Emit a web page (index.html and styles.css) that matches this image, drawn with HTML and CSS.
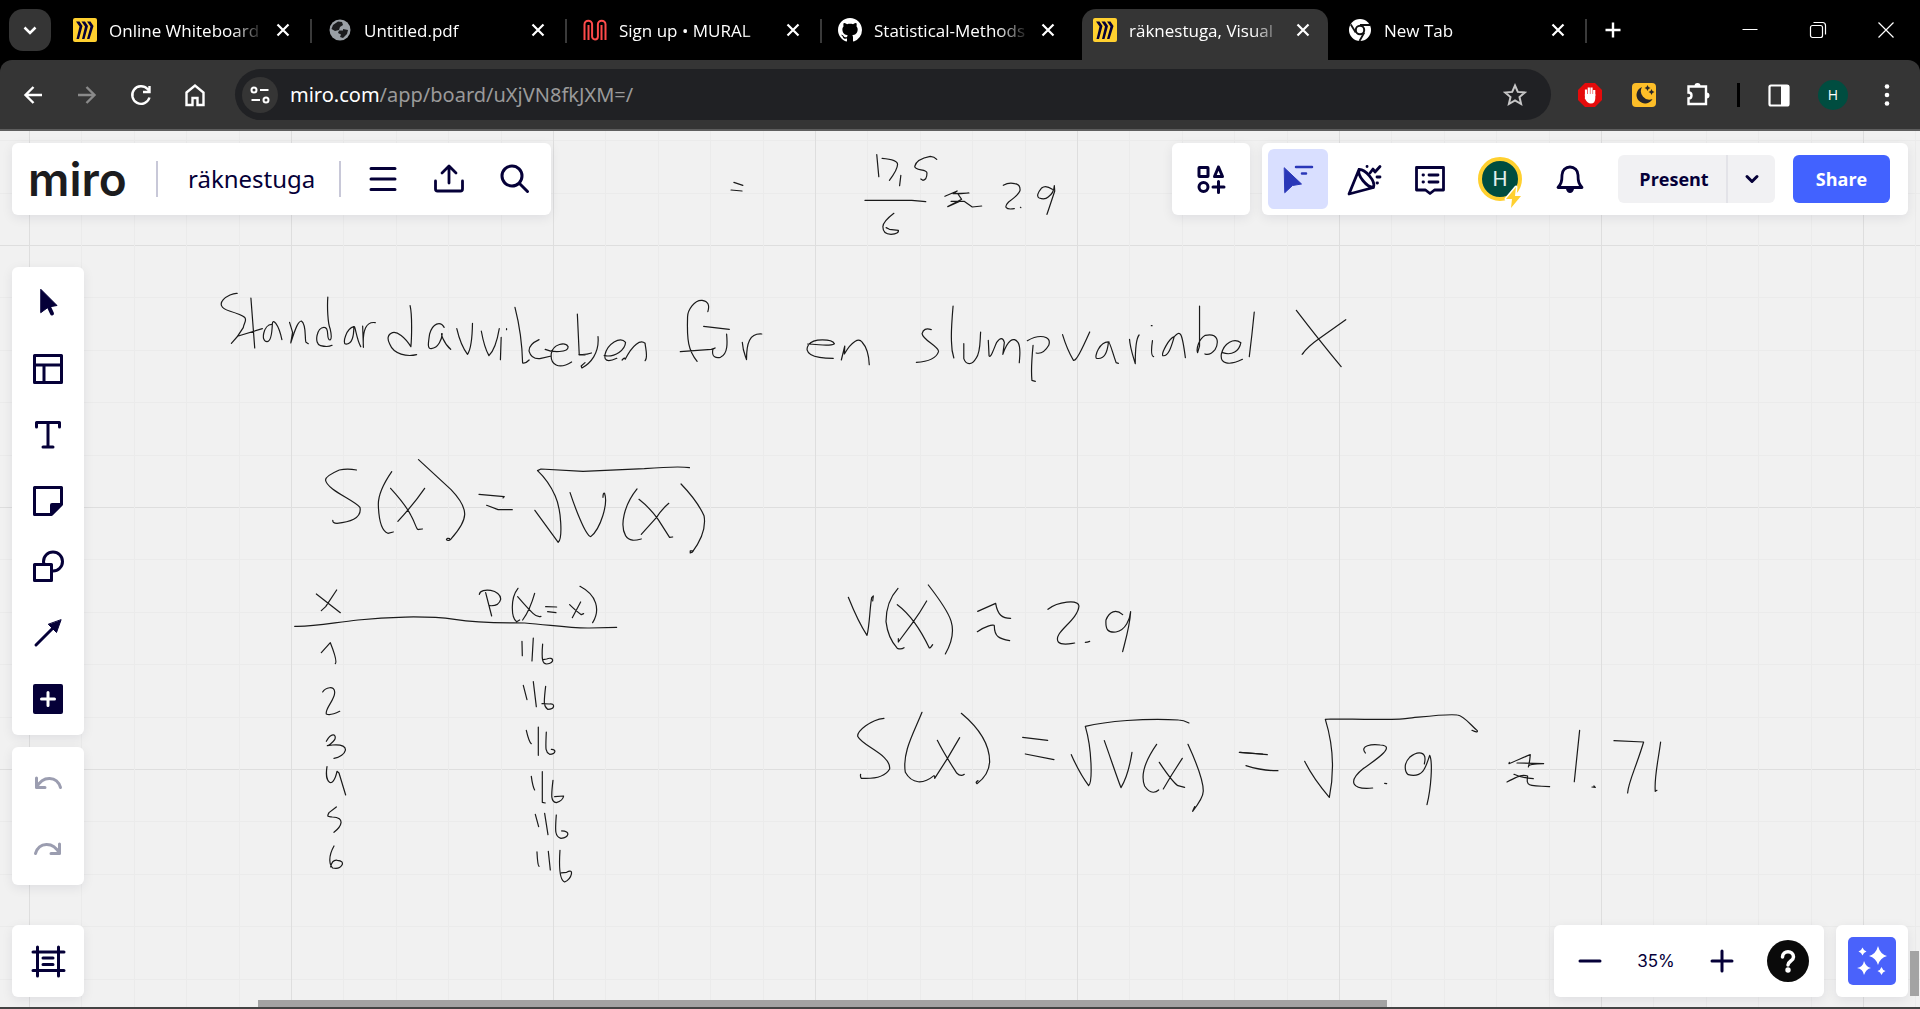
FILE: index.html
```html
<!DOCTYPE html>
<html lang="en">
<head>
<meta charset="utf-8">
<title>räknestuga, Visual Workspace</title>
<link rel="stylesheet" href="styles.css">
</head>
<body>
<svg class="defs" aria-hidden="true">
  <symbol id="i-close" viewBox="0 0 24 24"><path d="M6.500 6.500l11 11M17.500 6.500l-11 11" stroke-width="2.200"/></symbol>
  <symbol id="i-miro" viewBox="0 0 24 24"><rect width="24" height="24" rx="2" fill="#ffd02f" stroke="none"/><path d="M3 3.500h3.500l3 4.500-3.500 13H3.500l3-12.500zM8.500 3.500H12l3 4.500-3.500 13H9l3-12.500zM14 3.500h3.500l3 4.500-4 13H14l3.500-12.500z" fill="#050038" stroke="none"/></symbol>
</svg>

<header class="browser">
  <div class="tabs">
    <button class="tab-search" aria-label="Search tabs"><svg viewBox="0 0 24 24"><path d="M6.500 9.500l5.500 5.500 5.500-5.500" stroke-width="2.500"/></svg></button>
    <div class="tab"><svg class="fav"><use href="#i-miro"/></svg><span class="title">Online Whiteboard</span><button class="x" aria-label="Close tab"><svg><use href="#i-close"/></svg></button></div>
    <div class="tab"><svg class="fav" viewBox="0 0 24 24"><circle cx="12" cy="12" r="10.500" fill="#9aa0a6" stroke="none"/><path d="M10 3.500l4 .5 1 3-3 2-1 3-4 1-3.500-2 1.500-4zM15 11l5 1-1 4-4 4-3-1 1-2.500-3-1.500 1-2.500 4 0z" fill="#1b1c1e" stroke="none"/></svg><span class="title">Untitled.pdf</span><button class="x" aria-label="Close tab"><svg><use href="#i-close"/></svg></button></div>
    <div class="tab"><svg class="fav" viewBox="0 0 24 24"><path d="M1.500 22V6.500a3.800 3.800 0 0 1 7.600 0v12a2.900 2.900 0 0 0 5.800 0v-12a3.800 3.800 0 0 1 7.600 0V22M5.500 22V7M18.500 22V7" stroke="#ff4b4b" stroke-width="2" stroke-linecap="butt"/></svg><span class="title">Sign up • MURAL</span><button class="x" aria-label="Close tab"><svg><use href="#i-close"/></svg></button></div>
    <div class="tab"><svg class="fav" viewBox="0 0 16 16"><path fill="#fff" stroke="none" d="M8 0C3.580 0 0 3.580 0 8c0 3.540 2.290 6.530 5.470 7.590.4.070.55-.17.55-.38 0-.19-.01-.82-.01-1.490-2.010.37-2.530-.49-2.690-.94-.09-.23-.48-.94-.82-1.130-.28-.15-.68-.52-.01-.53.63-.01 1.080.58 1.230.82.72 1.210 1.870.87 2.330.66.07-.52.28-.87.51-1.070-1.780-.2-3.640-.89-3.640-3.950 0-.87.31-1.590.82-2.150-.08-.2-.36-1.020.08-2.120 0 0 .67-.21 2.200.82.64-.18 1.320-.27 2-.27s1.360.09 2 .27c1.530-1.040 2.200-.82 2.200-.82.44 1.100.16 1.920.08 2.120.51.56.82 1.270.82 2.150 0 3.070-1.870 3.750-3.650 3.950.29.25.54.73.54 1.480 0 1.070-.01 1.930-.01 2.200 0 .21.15.46.55.38A8.010 8.010 0 0 0 16 8c0-4.420-3.580-8-8-8z"/></svg><span class="title">Statistical-Methods</span><button class="x" aria-label="Close tab"><svg><use href="#i-close"/></svg></button></div>
    <div class="tab active"><svg class="fav"><use href="#i-miro"/></svg><span class="title">räknestuga, Visual</span><button class="x" aria-label="Close tab"><svg><use href="#i-close"/></svg></button></div>
    <div class="tab"><svg class="fav" viewBox="0 0 24 24"><circle cx="12" cy="12" r="11" fill="#fff" stroke="none"/><circle cx="12" cy="12" r="4.200" fill="#fff" stroke="#111" stroke-width="2"/><path d="M12 7h10M7.700 14.500L2.800 6.500M16.300 14.500L11.500 23" stroke="#111" stroke-width="1.800"/></svg><span class="title">New Tab</span><button class="x" aria-label="Close tab"><svg><use href="#i-close"/></svg></button></div>
    <button class="x new" aria-label="New tab"><svg viewBox="0 0 24 24"><path d="M12 4.500v15M4.500 12h15" stroke-width="2.400"/></svg></button>
    <div class="window">
      <button aria-label="Minimize"><svg viewBox="0 0 24 24"><path d="M4.500 11.500h15" stroke-width="1"/></svg></button>
      <button aria-label="Restore"><svg viewBox="0 0 24 24"><rect x="4.500" y="7.500" width="12" height="12" rx="2" stroke-width="1.200"/><path d="M7.500 4.500h9a3 3 0 0 1 3 3v9" stroke-width="1.200"/></svg></button>
      <button aria-label="Close"><svg viewBox="0 0 24 24"><path d="M4.500 4.500l15 15M19.500 4.500l-15 15" stroke-width="1.200"/></svg></button>
    </div>
  </div>
  <div class="toolbar">
    <button aria-label="Back"><svg viewBox="0 0 24 24"><path d="M21 12H4.500M12.500 4l-8 8 8 8" stroke-width="2.400"/></svg></button>
    <button class="dim" aria-label="Forward"><svg viewBox="0 0 24 24"><path d="M3 12h16.500M11.500 4l8 8-8 8" stroke-width="2.400"/></svg></button>
    <button aria-label="Reload"><svg viewBox="0 0 24 24"><path d="M20.500 14.500a8.800 8.800 0 1 1-2-8.500l2 2M20.500 3v6h-6.500" stroke-width="2.400"/></svg></button>
    <button aria-label="Home"><svg viewBox="0 0 24 24"><path d="M3.500 9.500L12 2.500l8.500 7V22h-6v-7h-5v7h-6z" stroke-width="2.400"/></svg></button>
    <div class="omnibox">
      <button class="chip" aria-label="Site information"><svg viewBox="0 0 24 24"><path d="M12 7h8.500M3.500 17H12" stroke-width="2.200"/><circle cx="6" cy="7" r="2.500" stroke-width="2"/><circle cx="18" cy="17" r="2.500" stroke-width="2"/></svg></button>
      <a class="url" href="#"><b>miro.com</b>/app/board/uXjVN8fkJXM=/</a>
      <button class="star" aria-label="Bookmark"><svg viewBox="0 0 24 24"><path d="M12 2.500l2.800 6.400 7 .6-5.300 4.600 1.600 6.900-6.100-3.700L5.900 21l1.600-6.900L2.200 9.500l7-.6z" stroke-width="2"/></svg></button>
    </div>
    <button aria-label="AdBlock"><svg viewBox="0 0 24 24"><path d="M7 0h10l7 7v10l-7 7H7l-7-7V7z" fill="#e50b0b" stroke="none"/><path d="M8 13V6.500M10.800 12V4.500M13.500 12V4.500M16.200 13V7" stroke-width="2.200"/><path d="M6.900 11h10.400v4q0 5.500-4.500 5.500-3.500 0-5.900-5z" fill="#fff" stroke="none"/></svg></button>
    <button aria-label="Dark mode extension"><svg viewBox="0 0 24 24"><rect width="24" height="24" rx="4" fill="#fdbe28" stroke="none"/><path d="M10 4a8.500 8.500 0 1 0 10.500 12A8.500 8.500 0 0 1 10 4zM15.500 2l1 2 2 1-2 1-1 2-1-2-2-1 2-1zM19.500 6l1 2 2 1-2 1-1 2-1-2-2-1 2-1z" fill="#26262b" stroke="none"/></svg></button>
    <button aria-label="Extensions"><svg viewBox="0 0 24 24"><path d="M2.500 3.500H20v17.500H2.500v-5.500c4 0 4-6 0-6z" stroke-width="2.400"/><path d="M8.500 3a3 3 0 0 1 6 0zM20.500 9.500a3 3 0 0 1 0 6z" fill="#fff" stroke="none"/></svg></button>
    <span class="bar"></span>
    <button aria-label="Side panel"><svg viewBox="0 0 24 24"><rect x="2.500" y="2.500" width="19" height="20" rx="1.500" stroke-width="2.200"/><path d="M14 2h8v21h-8z" fill="#fff" stroke="none"/></svg></button>
    <button class="profile" aria-label="Profile">H</button>
    <button aria-label="Menu"><svg viewBox="0 0 24 24"><g fill="#fff" stroke="none"><circle cx="12" cy="3.500" r="2.300"/><circle cx="12" cy="12" r="2.300"/><circle cx="12" cy="20.500" r="2.300"/></g></svg></button>
  </div>
</header>

<main class="board">
  <!-- Pen strokes on the canvas, one group per written line -->
  <svg class="ink" role="img" aria-label="Handwritten notes: Standardavvikelsen för en slumpvariabel X">
    <g transform="translate(640 -131) scale(.4082 .3333)">
      <path d="M230 547l22 9M223 570l27 3M580 464l5 66M593 475q38 4 38 18 0 16-20 48M639 526l-3 31M727 478q-6-8-16-9-34 8-38 30c0 15 30 6 30 20q0 20-10 22l-5-4M551 601h115l34 4M622 640q-26 24-27 40 0 22 20 23 20-2 18-12l-22-3-8-5M747 589l30-16-10 8 39-2-27 3 9 16-34 22 30-16 10 0 20 17 23-3M762 604l24 0M890 556q14-10 28-5 14 2 13 20-2 12-28 35c-12 15-8 24 14 20M932 622l1 1M1010 568q-16-14-26-4-16 24-6 30 14 6 22-3 14-12 15-34l1 16q-8 30-19 70"/>
    </g>
    <g transform="translate(200 139) scale(.3827 .3333)">
      <path d="M97 70c-20-2-70 35-20 53 60 22 40 23 36 50q-14 28-31 47M133 84l10 150M100 198l63-22M187 163c-20 0-30 52-12 52 14 0 14-60 14-52 0-20 16-3 25 46M234 157l8 30-5 32c14-50 20-65 28-66 14 10 8 55 12 64l6 4M334 81c-2 30 0 80 6 95q6 30 0 34c-12 0 0-38-15-38-20-2-28 50-10 55 14 4 25 2 30-1M402 170c-20 5-30 50-22 52 18 2 22-25 22-52 4-5 6 35 18 60M425 168l2 64q-4-80 31-74M549 107c6 30 4 100 2 123-16-30-36-46-48-42-14 6-14 20-7 35 10 30 45 38 70 31M638 172c-10-20-30-12-38 20-4 30-6 44 4 44 20-2 28-30 29-45-6-5 4 30 22 47M671 176q10 50 28 77 12-20 13-93M735 183q8 50 20 74 18-20 27-81M787 202l-2 67M801 176v3M823 112q18 80 20 167 8 2 17-9M886 209q-28 15-26 35 6 24 28 22l30-8M902 238c20 10 60 10 60-8-6-16-40-8-44 20-4 35 20 50 53 26M986 132l5 123h15M990 253q18 2 33-4M1040 200c4 50-20 80-42 94l-2-6 10-10M1056 257c30 6 55-18 56-40-14-20-48 5-54 38-2 14 4 24 31 10M1103 270q8-10 8-2c20-45 40-60 52-48 2 20 8 45 0 52"/>
      <path d="M1327 125q8-30-15-34c-20-2-38 30-38 50-2 70 2 100 25 133M1316 169l67 9M1255 245l81-7 10-4-6 4c-4 26 10 26 20 24 20-10 18-45 16-70M1417 217c2 30 8 40 11 52 0-50 8-80 40-77"/>
      <path d="M409 600q-24-5-45 0-36 18-36 30c4 30 75 60 90 82 6 35-30 45-60 48q-12 0-11-9M501 605q-36 60-35 100 2 75 25 85l14-4M498 655q40 50 54 83c12 25 14 45 20 40l9-1M587 655q-30 50-70 99M571 569l85 90c50 60 45 90 0 148q-8 8-12 2 2-6 8-3M729 673l66 7-3 4M749 706l30 13h37M882 602l9-5 110 7 160-8q90-8 118-3M875 721l61 96c12-12 8-100-8-140q-18-45-46-75M967 668c10 35 40 130 54 132 26-24 46-100 36-130q-4-2-4 12M1142 657c-35 50-45 110-30 140 10 18 25 15 41 10M1147 688q28 25 50 60l30 54 8-1M1225 700q-20 20-32 42l-40 51M1257 642q42 50 60 95 8 50-31 110l-5 2v-6h8"/>
    </g>
    <g transform="translate(800 139) scale(.3827 .3333)">
      <path d="M20 222c30 0 55 10 70-1-6-14-55-18-68 4-12 22 6 40 65 40M108 270l9-42-1 24c20-40 38-48 46-36 12 15 18 40 19 68M343 179q-20-8-24 12c2 20 44 38 43 54-6 20-24 30-58 32M400 108q-6 80-4 110 0 24 6 46M428 221v45c6 20 22 20 32-1 12-16 10-50 12-79M492 211l2 46c4 10 12-20 20-40 10-15 16-14 20 0l-4 36c12-42 28-55 40-35 8 16 4 40 3 60M609 226q-6 70-3 105l9 3M594 212c30-20 65-16 56 14q-14 28-33 23M686 194q12 45 28 76c6 8 22-30 43-84M808 216c-25-3-40 45-33 49 20 4 28-16 31-49 4 0 10 30 20 62l6 2M861 208c2 30 12 60 15 73 0-50 2-75 10-86M918 167h2M921 212q-6 45 3 48M978 200c-14 5-34 50-30 57 16 4 24-35 30-57 16-20 20-15 29 63M1044 108v120l-5 20c-4-10 2-40 20-52 34-8 36 20 26 42q-14 20-27 14M1104 248c25 10 44-5 48-30-18-15-44 0-51 34-4 30 20 36 55 16M1187 126q-6 70-13 134M1297 121q60 90 117 169M1426 149l-70 57q-30 24-44 47l3-3"/>
    </g>
    <g transform="translate(280 439) scale(.3333)">
      <path d="M109 72l72 56M170 60l-33 50-13 12M44 169c60 2 120-12 190-19 80-9 200-14 290-2 80 12 150 10 210 11 80 6 130 16 195 15l81-2M598 73c4-22 66-14 64 15-4 16-20 20-33 19M617 68l18 70M714 55c-24 30-20 90-4 100l9-5M713 80q30 35 46 50 12 12 24 9M764 70q-14 50-36 80M797 110l33 1M803 125l25 3M869 104q20 20 35 30l7-3M902 96l-25 47M900 49c50 26 62 70 38 109"/>
      <path d="M124 248l27-30c6 15 22 55 15 63M128 366c8-14 36-20 36 0 2 22-30 50-25 66 12 6 28-2 40-8M139 514c16-30 32-20 25-5-6 10-20 18-22 18l16-2c60-5 40 35 4 40M141 590c-8 50 18 70 30 14l6 5 20 66M169 711l-22 17c-8 14-2 12 10 13 40 2 28 28 5 46M162 828c-20 35-12 60-4 66 28 6 42-22 14-23-12-2-18 10-20 20"/>
      <path d="M726 214l1 43M760 204l-4 69M788 222c-4 50 0 60 12 60 26-2 22-24 0-15l-10 2M730 346l11 43M760 335l9 75M797 349c-6 50-6 60 6 69 24 0 22-20 5-16l-22-1M739 481q8 35 15 40M775 471v85M799 486c-2 50-4 60 10 67 20 0 20-16 5-15M754 619q4 30 10 41M787 605v92l9 2M819 631c-6 50-6 64 10 67q20-6 22-20l-27 2M766 733l10 37M794 730l10 64M829 735c-4 50-4 65 14 70 24-2 30-22 2-22M771 846q2 40 6 43M805 844l6 56M840 841c-4 60 0 90 14 95 22-10 30-44 6-29l-16 2"/>
    </g>
    <g transform="translate(820 439) scale(.3333)">
      <path d="M85 82c24 60 50 105 56 114 8-30 8-80 14-113l5-5-2 15M234 55q-36 40-36 100 6 50 34 80 12 4 20-2M232 104c40 30 70 75 96 130q4 0 10-10M320 93q-20 35-44 68l-41 55v-10M325 45c70 90 95 130 51 207M473 124l54-24c6 35 20 45 45 45M472 185c20-14 50-24 51-18 0 34 16 40 46 45M684 118c30-24 90-30 93-10-4 45-80 80-62 108 12 12 40 4 49 3M796 217q6 0 13-3M908 134c-20-18-40-10-50 16-2 30 6 38 30 36 30-6 42-40 44-61-2 40-14 80-24 120"/>
      <path d="M192 445c-40 4-80 38-79 54 14 30 100 55 96 98-14 24-50 30-85 28q-4-6-2-12M306 427c-24 60-60 120-50 180 20 36 54 36 86 10M352 511c20 40 40 70 58 98q12 12 23 4M419 503l-37 63-38 59v-6M424 430c60 50 85 95 85 145q-2 40-38 66-6-4 3-9M608 502l75 9M616 552l86 17M754 554q24 55 52 93c12-10 10-110-10-178 60-14 180-26 280-19q14 0 31 9M853 512c18 50 38 110 50 141 18-30 26-60 33-106M1010 523c-35 50-50 90-36 125 18 28 36 18 42 12M1018 577c20 30 40 60 56 70l20 5M1087 565l-32 50-25 42M1104 523q46 100 46 140 0 20-32 61l6-14M1258 547l70 5M1278 587q50 16 96 15"/>
    </g>
    <g transform="translate(1240 559) scale(.3333)">
      <path d="M0 580l82 7" transform="translate(0 -393)"/>
      <path d="M194 607c20 40 50 80 74 108 14-70 14-150-12-234l16-1c70 0 190 4 230-2 60-6 120-14 150-10 20 2 40 30 60 47q2 8-16-1M376 582c-18-22 20-28 45-24 50 2-14 45-50 70-50 40-35 65 27 59M434 673l6 1M553 615c10-40-20-40-44-20-20 20-14 45-4 52 44 10 52-20 64-58 10 20 4 100-8 148M808 610l-1 4c20-8 46-20 64-27q-2 24-6 37 0-10 46-10l-80-2M801 669c30-14 40-24 62-18-4 30-2 30 66 32M822 646q20 10 58 13M1019 514l-16 154M1056 684l10 1-4-4M1122 545l89 4c-24 80-46 120-48 153M1262 549c-8 60-20 110-16 148l5-3" transform="translate(0 -393)"/>
    </g>
  </svg>

  <div class="overlay">
    <div class="row">
      <nav class="panel head">
        <a class="logo" href="#">miro</a>
        <span class="rule"></span>
        <button class="name">räknestuga</button>
        <span class="rule"></span>
        <button class="tool" aria-label="Main menu"><svg viewBox="0 0 36 36"><path d="M6 7.500h24M6 18h24M6 28.500h24"/></svg></button>
        <button class="tool" aria-label="Export"><svg viewBox="0 0 36 36"><path d="M4.500 20v8q0 2 2 2h23q2 0 2-2v-8M18 22V5.500M11 12l7-7 7 7" stroke-width="2.800"/></svg></button>
        <button class="tool" aria-label="Search"><svg viewBox="0 0 36 36"><circle cx="15" cy="15" r="10"/><path d="M22.500 22.500l8 8"/></svg></button>
      </nav>
      <div class="group">
        <div class="panel apps"><button class="tool" aria-label="Apps"><svg viewBox="0 0 36 36"><rect x="6" y="6.500" width="9" height="9" rx=".5"/><path d="M25.500 6l-4 9.500h8zM25.500 20.500v11M20 26h11"/><circle cx="10.500" cy="26" r="4.500"/></svg></button></div>
        <div class="panel collab">
          <button class="tool on" aria-label="Pointer"><svg viewBox="0 0 36 36"><path d="M4.500 7l17 16-9 1.500-7.500 7z" fill="#2a37b8" stroke="#2a37b8" stroke-width="1"/><path d="M16 6h16M22 12.500h4" stroke="#2a37b8" stroke-width="2.500"/></svg></button>
          <button class="tool" aria-label="Reactions"><svg viewBox="0 0 36 36"><path d="M3 33L13 8.500C19 8 30 20 27.500 26.500zM13 8.500c-2 6 8 18 14.500 18" stroke-width="2.800"/><path d="M21 5.500h.1M24 12l3-4 2 3 5-5.500M31 16h3M31 22h.5" stroke-width="2.800"/></svg></button>
          <button class="tool" aria-label="Comments"><svg viewBox="0 0 36 36"><path d="M4.500 6.500h27v22.500h-9l-4.500 3.500-4.500-3.500h-9zM11 14h.5M17 14h9M11 21h.5M17 21h9" stroke-width="2.800"/></svg></button>
          <button class="avatar" aria-label="Account">H<svg viewBox="0 0 24 24"><path d="M14 2L4 14h6l-1 9 10-12h-6z" fill="#ffd02f" stroke="#fff" stroke-width="3" paint-order="stroke"/></svg></button>
          <button class="tool" aria-label="Notifications"><svg viewBox="0 0 36 36"><path d="M18 6a8 8 0 0 0-8 8c0 7-1 9-4 12.500h24c-3-3.500-4-5.500-4-12.500a8 8 0 0 0-8-8z" stroke-width="2.800"/><path d="M14 28h8q-1 4-4 4t-4-4z" fill="#050038" stroke="none"/></svg></button>
          <div class="split"><button>Present</button><button class="drop" aria-label="Present options"><svg viewBox="0 0 24 24"><path d="M7 9.500l5 5 5-5"/></svg></button></div>
          <button class="share">Share</button>
        </div>
      </div>
    </div>

    <aside class="side">
      <div class="panel column">
        <button class="tool" aria-label="Select"><svg viewBox="0 0 36 36"><path d="M11 4.500l16 16-8.500 1.500-7.500 5.500z" fill="#050038" stroke-width="1"/><path d="M19 22l3 6.500" stroke-width="4"/></svg></button>
        <button class="tool" aria-label="Templates"><svg viewBox="0 0 36 36"><path d="M4.500 4.500h27v27h-27zM4.500 14h27M14 14v17"/></svg></button>
        <button class="tool" aria-label="Text"><svg viewBox="0 0 36 36"><path d="M6.500 10V5.500h23V10M18 5.500V30M13 30h10"/></svg></button>
        <button class="tool" aria-label="Sticky note"><svg viewBox="0 0 36 36"><path d="M4.500 4.500h27v17l-10 10h-17z"/><path d="M20 32V22q0-2 2-2h10v2L22 32z" fill="#050038" stroke="none"/></svg></button>
        <button class="tool" aria-label="Shapes"><svg viewBox="0 0 36 36"><circle cx="23" cy="12.500" r="9.500"/><rect x="4.500" y="15.500" width="17" height="16" fill="#fff"/></svg></button>
        <button class="tool" aria-label="Connection line"><svg viewBox="0 0 36 36"><path d="M6 30l16-16"/><path d="M31 5l-4.500 12.500-8-8z" fill="#050038" stroke-width="1"/></svg></button>
        <button class="tool" aria-label="More tools"><svg viewBox="0 0 36 36"><rect x="3" y="3" width="30" height="30" rx="2" fill="#050038" stroke="none"/><path d="M18 11.500v13M11.500 18h13" stroke="#fff"/></svg></button>
      </div>
      <div class="panel column muted">
        <button class="tool" aria-label="Undo"><svg viewBox="0 0 36 36"><path d="M6.500 13v9.500H15M6.500 22.500C13 10 27 11 30.500 22.500"/></svg></button>
        <button class="tool" aria-label="Redo"><svg viewBox="0 0 36 36"><path d="M29.500 13v9.500H21M29.500 22.500C23 10 9 11 5.500 22.500"/></svg></button>
      </div>
    </aside>

    <div class="row">
      <div class="panel column"><button class="tool" aria-label="Frames"><svg viewBox="0 0 36 36"><path d="M7.500 4v29M28.500 4v29M3 9h31M3 27.500h31M13 15h10M13 21.500h10"/></svg></button></div>
      <div class="group">
        <div class="panel zoom">
          <button class="tool" aria-label="Zoom out"><svg viewBox="0 0 36 36"><path d="M8 18h20"/></svg></button>
          <button class="percent">35%</button>
          <button class="tool" aria-label="Zoom in"><svg viewBox="0 0 36 36"><path d="M8 18h20M18 8v20"/></svg></button>
          <button class="help" aria-label="Help"><svg viewBox="0 0 42 42"><path d="M15.500 17c0-7 11-7 11 0 0 4-5.500 4-5.500 8" stroke="#fff" stroke-width="3.500"/><circle cx="21" cy="30" r="2.700" fill="#fff" stroke="none"/></svg></button>
        </div>
        <div class="panel"><button class="ai" aria-label="Assist"><svg viewBox="0 0 48 48"><path fill="#fff" stroke="none" d="M30 9q2 8 9 10-7 2-9 9-2-7-9-9 7-2 9-10zM16 24q2 6 7 7-5 1-7 7-1-6-7-7 6-1 7-7zM14.500 10.500q1 3 4 4-3 1-4 4-1-3-4-4 3-1 4-4zM33.500 30q1 3 4 4-3 1-4 4-1-3-4-4 3-1 4-4z"/></svg></button></div>
      </div>
    </div>
  </div>
  <div class="scroll-x"></div>
  <div class="scroll-y"></div>
</main>
</body>
</html>
```
FILE: styles.css
```css
* { box-sizing: border-box; }
body {
  margin: 0;
  min-height: 100vh;
  display: flex;
  flex-direction: column;
  background: #000;
  font-family: "Open Sans", "Noto Sans", sans-serif;
}
button {
  border: 0;
  padding: 0;
  background: none;
  color: inherit;
  font: inherit;
  display: flex;
  align-items: center;
  justify-content: center;
  flex: none;
}
a { color: inherit; text-decoration: none; }
svg {
  fill: none;
  stroke: currentColor;
  stroke-linecap: round;
  stroke-linejoin: round;
  flex: none;
}
.defs { display: none; }

/* Browser chrome */
.browser { color: #fff; }
.browser svg { width: 24px; height: 24px; stroke-linecap: butt; stroke-linejoin: miter; }
.tabs { height: 60px; display: flex; align-items: center; padding-left: 9px; }
.tab-search { width: 42px; height: 42px; border-radius: 14px; background: #353535; margin-right: 6px; }
.tab {
  position: relative;
  flex: 0 1 255px;
  min-width: 0;
  height: 60px;
  display: flex;
  align-items: center;
  padding: 0 17px 0 16px;
}
.tab::after {
  content: "";
  position: absolute;
  right: 0;
  top: 19px;
  width: 2px;
  height: 24px;
  background: #3a3a3a;
}
.tab.active::after, .tab:has(+ .active)::after { display: none; }
.tab > * { position: relative; }
.tab.active::before {
  content: "";
  position: absolute;
  left: 5px;
  right: 4px;
  top: 9px;
  bottom: 0;
  border-radius: 14px 14px 0 0;
  background: #353535;
}
.title {
  flex: 1;
  margin-left: 12px;
  padding-top: 2px;
  overflow: hidden;
  white-space: nowrap;
  font-size: 17px;
  line-height: 24px;
  mask-image: linear-gradient(90deg, #000 76%, transparent 96%);
}
.x { width: 24px; height: 24px; }
.new { margin: 0 12px 0 14px; }
.window { margin-left: auto; display: flex; }
.window button { width: 68px; height: 60px; }
.toolbar {
  height: 71px;
  display: flex;
  align-items: center;
  padding: 0 6px;
  border-bottom: 2px solid #5e5e5e;
  border-radius: 12px 12px 0 0;
  background: #353535;
}
.toolbar > button { width: 54px; height: 54px; }
.toolbar .dim { color: #8a8a8a; }
.omnibox {
  flex: 1;
  height: 51px;
  display: flex;
  align-items: center;
  margin: 0 12px 0 13px;
  padding: 0 24px 0 7px;
  border-radius: 26px;
  background: #202124;
}
.chip { width: 36px; height: 36px; border-radius: 18px; background: #353535; }
.url { flex: 1; padding-left: 12px; font-family: "Noto Sans", sans-serif; font-size: 20px; line-height: 28px; color: #9a9a9a; }
.url b { font-weight: 400; color: #fff; }
.star { color: #c7c7c7; }
.bar { width: 3px; height: 24px; margin: 0 12px; background: #000; }
.toolbar .profile { width: 30px; height: 30px; margin: 0 12px; border-radius: 15px; background: #004d40; font-size: 14px; }

/* Board */
.board {
  position: relative;
  flex: 1;
  display: flex;
  overflow: hidden;
  border-bottom: 2px solid #444;
  background-color: #f1f1f1;
  background-image:
    linear-gradient(90deg, #dedede 1px, transparent 1px 52px, #ebebeb 52px 53px, transparent 53px 105px, #ebebeb 105px 106px, transparent 106px 157px, #ebebeb 157px 158px, transparent 158px 210px, #ebebeb 210px 211px, transparent 211px),
    linear-gradient(#dedede 1px, transparent 1px 52px, #ebebeb 52px 53px, transparent 53px 105px, #ebebeb 105px 106px, transparent 106px 157px, #ebebeb 157px 158px, transparent 158px 210px, #ebebeb 210px 211px, transparent 211px);
  background-size: 262px 262px;
  background-position: 29px 114px;
  color: #050038;
}
.ink { position: absolute; inset: 0; width: 100%; height: 100%; color: #1a1a1a; }
.ink path { stroke-width: 1.2px; vector-effect: non-scaling-stroke; }
.overlay {
  position: relative;
  flex: 1;
  display: flex;
  flex-direction: column;
  padding: 12px 12px 10px;
}
.row { display: flex; justify-content: space-between; }
.group { display: flex; gap: 12px; }
.panel {
  min-height: 72px;
  display: flex;
  align-items: center;
  justify-content: center;
  padding: 0 12px;
  border-radius: 6px;
  background: #fff;
  box-shadow: 0 3px 12px rgba(5, 0, 56, .08);
}
.tool { width: 66px; height: 66px; }
.tool svg { width: 36px; height: 36px; stroke-width: 3px; }
.head { padding: 0 3px 0 16px; }
.logo { width: 98px; font-family: Inter, sans-serif; font-weight: 600; font-size: 46px; line-height: 48px; color: #1c1c1e; }
.rule { width: 2px; height: 36px; margin: 0 30px; background: #c8c8d8; }
.head .rule:last-of-type { margin: 0 9px 0 24px; }
.name { font-family: "Noto Sans", sans-serif; font-size: 24px; line-height: 32px; }
.apps { width: 78px; padding: 0; }
.collab { padding: 0 18px 0 6px; }
.collab .on { width: 60px; height: 60px; margin-right: 3px; border-radius: 6px; background: #d9dfff; }
.avatar {
  position: relative;
  width: 44px;
  height: 44px;
  margin: 0 15px;
  border: 4px solid #ffd02f;
  border-radius: 22px;
  background: #004d40;
  color: #e0eeea;
  font-family: Roboto, sans-serif;
  font-size: 21px;
}
.avatar svg { position: absolute; right: -8px; bottom: -13px; width: 24px; height: 26px; }
.split { height: 48px; display: flex; margin: 0 18px 0 15px; border-radius: 6px; overflow: hidden; background: #f1f1f3; }
.split button { width: 108px; padding-left: 4px; font-weight: 700; font-size: 18px; }
.split .drop { width: 49px; padding: 0; border-left: 2px solid #e3e3e8; }
.drop svg { width: 24px; height: 24px; stroke-width: 3px; }
.share { width: 97px; height: 48px; border-radius: 6px; background: #4262ff; color: #fff; font-weight: 700; font-size: 18px; }
.side { flex: 1; display: flex; flex-direction: column; align-items: flex-start; gap: 12px; padding: 52px 0 40px; }
.column { flex-direction: column; padding: 3px; }
.muted { color: #9b9db0; }
.zoom { padding: 0 15px 0 3px; }
.percent { width: 66px; font-family: Inter, sans-serif; font-size: 17px; line-height: 24px; }
.help { width: 42px; height: 42px; margin-left: 12px; border-radius: 21px; background: #0a0a0a; }
.help svg { width: 42px; height: 42px; }
.ai { width: 48px; height: 48px; border-radius: 5px; background: #4a62fb; }
.ai svg { width: 48px; height: 48px; }
.scroll-x { position: absolute; left: 258px; right: 533px; bottom: 0; height: 7px; background: #a3a3a3; }
.scroll-y { position: absolute; right: 1px; bottom: 11px; width: 9px; height: 45px; background: #a3a3a3; }
```
